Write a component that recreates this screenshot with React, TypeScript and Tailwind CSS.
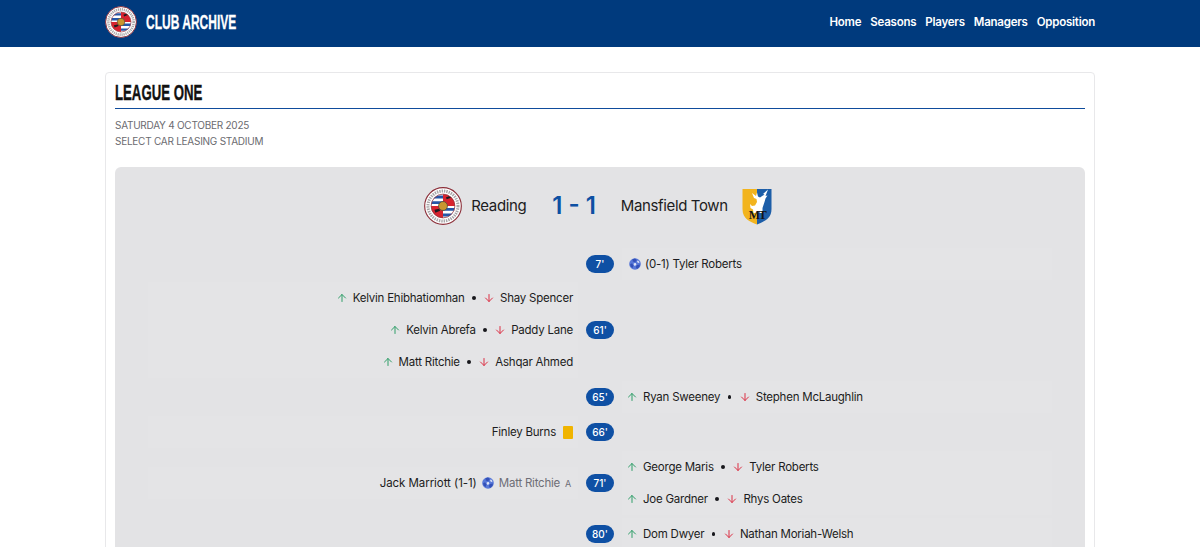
import { ArrowDown, ArrowUp } from 'lucide-react';

const ReadingCrest = ({ className, id }: { className: string; id: string }) => (
  <svg viewBox="0 0 40 40" className={className}>
    <defs>
      <clipPath id={id}>
        <circle cx="20" cy="20" r="12.500" />
      </clipPath>
    </defs>
    <circle cx="20" cy="20" r="19.300" fill="#fff" stroke="#8c2f39" strokeWidth="1.200" />
    <circle cx="20" cy="20" r="15.800" fill="none" stroke="#a8a6a8" strokeWidth="3.200" strokeDasharray="1.500 1" />
    <g clipPath={`url(#${id})`}>
      <rect x="7" y="7" width="26" height="26" fill="#fff" />
      <path d="M7 9h13v3H7zM7 15h13v3H7zM20 22h13v3H20zM20 28h13v3H20z" fill="#2657a8" />
      <path d="M20 7h13v13H20zM7 20h13v13H7z" fill="#d8232e" />
      <path d="M23 11l5-2 1 2-5 2zM11 24l5-1 1 2-5 2z" fill="#1d1d22" />
    </g>
    <circle cx="20" cy="20" r="12.500" fill="none" stroke="#8c2f39" strokeWidth="0.800" />
    <circle cx="20" cy="20" r="4.700" fill="#c9962f" stroke="#4d4a3a" strokeWidth="0.800" />
  </svg>
);

const MansfieldCrest = ({ className }: { className: string }) => (
  <svg viewBox="0 0 30 37" className={className}>
    <path d="M0.500 1H15V36.500C8 33.500 0.500 31 0.500 21z" fill="#f2b41e" />
    <path d="M15 1H29.500V21C29.500 31 22 33.500 15 36.500z" fill="#1d5ea8" />
    <path d="M26 1.500L21 6l1.500.5L18 9.500l-2-1-1-4-1 3.500-4-3 2 5 2.500 1 .5 3-2 3.500-3 .5-2-2 .5 4 2.500 1.500.5 3.500h9v-5l2-6 1-3.500 2-3-2 .5z" fill="#fff" />
    <text x="15" y="31" textAnchor="middle" fontFamily="'Liberation Serif', serif" fontWeight="700" fontSize="12" letterSpacing="-1.500" fill="#141414">MT</text>
  </svg>
);

const Ball = ({ className }: { className: string }) => (
  <svg viewBox="0 0 12 12" className={className}>
    <circle cx="6" cy="6" r="5.800" fill="#5878d8" />
    <path d="M3.500 1.200L6 .6 7.800 2 6.200 4.300 3.800 3.500zM1 6.500l2-1.200 1.500 2.200L3.600 10 1.800 8.800zM8 7l3-.5-.6 2.600-2.400 2L6.800 9z" fill="#3350b8" />
    <path d="M8.800 2.300l1.800 1.900-1 .9-1.600-1.100zM4.800 5.300l2-.3.600 1.700-1.500 1.200-1.200-1z" fill="#dfe5f7" />
  </svg>
);

const Name = ({ children, className = '' }: { children: React.ReactNode; className?: string }) => (
  <span className={`pt-[2px] ${className}`}>{children}</span>
);

const Sub = ({ on, off }: { on: string; off: string }) => (
  <span className="flex items-center">
    <ArrowUp className="w-3 h-3 text-[#2f9e68] mr-[5px]" strokeWidth={2} />
    <Name>{on}</Name>
    <span className="w-[3.5px] h-[3.5px] rounded-full bg-[#17171c] mx-[7.5px]" />
    <ArrowDown className="w-3 h-3 text-[#dc3045] mr-[5px]" strokeWidth={2} />
    <Name>{off}</Name>
  </span>
);

const Line = ({ children }: { children: React.ReactNode }) => (
  <div className="h-8 flex items-center">{children}</div>
);

interface EventRowProps {
  minute: string;
  left?: React.ReactNode;
  right?: React.ReactNode;
}

const EventRow = ({ minute, left, right }: EventRowProps) => (
  <div className="grid grid-cols-[1fr_44px_1fr] items-center">
    <div className={`flex flex-col items-end pr-[5px] ml-[15px] ${left ? 'bg-[#e4e4e6]' : ''}`}>{left}</div>
    <div className="flex justify-center">
      <span className="w-7 h-[18px] rounded-full bg-[#0f50a4] text-white text-[10px] font-medium tracking-normal flex items-center justify-center">
        {minute}
      </span>
    </div>
    <div className={`flex flex-col items-start pl-1 mr-[15px] ${right ? 'bg-[#e4e4e6]' : ''}`}>{right}</div>
  </div>
);

const navLinks = ['Home', 'Seasons', 'Players', 'Managers', 'Opposition'];

export default function App() {
  return (
    <div className="h-screen overflow-hidden bg-white font-['Inter',sans-serif] text-[#1c1c21]">
      <header className="h-[47px] bg-[#003a7d]">
        <div className="w-[990px] mx-auto h-[44px] flex items-center justify-between">
          <div className="flex items-center gap-[9px]">
            <ReadingCrest id="crest-nav" className="w-8 h-8" />
            <span className="inline-block origin-left scale-x-[0.6] font-['Liberation_Sans',sans-serif] font-bold text-white text-[20px] [-webkit-text-stroke:0.3px_currentColor]">
              CLUB ARCHIVE
            </span>
          </div>
          <nav className="flex gap-[9px] pt-[2px] text-white text-[11.5px] font-semibold tracking-[-0.02em]">
            {navLinks.map((link) => (
              <a key={link}>{link}</a>
            ))}
          </nav>
        </div>
      </header>

      <main className="w-[990px] mx-auto mt-[25px] border border-[#e8e8ea] rounded p-[9px] pt-[5px]">
        <h1 className="font-['Liberation_Sans',sans-serif] font-bold text-[22px] leading-[30px] text-[#111] border-b border-[#0f4c9c]">
          <span className="inline-block origin-left scale-x-[0.6] [-webkit-text-stroke:0.4px_currentColor]">LEAGUE ONE</span>
        </h1>
        <div className="mt-2 text-[10px] tracking-[-0.025em] leading-4 text-[#6b6b70]">
          <p>SATURDAY 4 OCTOBER 2025</p>
          <p>SELECT CAR LEASING STADIUM</p>
        </div>

        <section className="mt-[18px] bg-[#e3e3e5] rounded-md pb-6">
          <div className="h-[78px] pr-1 flex items-center justify-center">
            <ReadingCrest id="crest-home" className="w-[38px] h-[38px] mr-[9px]" />
            <span className="text-[15px] tracking-[-0.025em]">Reading</span>
            <span className="ml-[26px] mr-[25px] text-[24px] font-semibold text-[#0d50a3]">1 - 1</span>
            <span className="text-[15px] tracking-[-0.025em]">Mansfield Town</span>
            <MansfieldCrest className="w-[30px] h-[37px] ml-[14px]" />
          </div>

          <div className="mx-[18px] mt-[3px] flex flex-col gap-[3px] text-[11.5px] tracking-[-0.02em]">
            <div className="-mb-px">
              <EventRow
                minute="7'"
                right={
                  <Line>
                    <Ball className="w-3 h-3 ml-[3px] mr-[4px]" />
                    <Name>(0-1) Tyler Roberts</Name>
                  </Line>
                }
              />
            </div>
            <EventRow
              minute="61'"
              left={
                <>
                  <Line><Sub on="Kelvin Ehibhatiomhan" off="Shay Spencer" /></Line>
                  <Line><Sub on="Kelvin Abrefa" off="Paddy Lane" /></Line>
                  <Line><Sub on="Matt Ritchie" off="Ashqar Ahmed" /></Line>
                </>
              }
            />
            <EventRow minute="65'" right={<Line><Sub on="Ryan Sweeney" off="Stephen McLaughlin" /></Line>} />
            <EventRow
              minute="66'"
              left={
                <Line>
                  <Name>Finley Burns</Name>
                  <span className="w-[10px] h-[13px] rounded-[1px] bg-[#f0b400] ml-[7px]" />
                </Line>
              }
            />
            <EventRow
              minute="71'"
              left={
                <Line>
                  <Name className="tracking-[-0.005em]">Jack Marriott (1-1)</Name>
                  <Ball className="w-3 h-3 mx-[5px]" />
                  <Name className="text-[#6e6e76]">Matt Ritchie</Name>
                  <Name className="text-[#6e6e76] text-[9px] ml-[5px] mr-[2px]">A</Name>
                </Line>
              }
              right={
                <>
                  <Line><Sub on="George Maris" off="Tyler Roberts" /></Line>
                  <Line><Sub on="Joe Gardner" off="Rhys Oates" /></Line>
                </>
              }
            />
            <EventRow minute="80'" right={<Line><Sub on="Dom Dwyer" off="Nathan Moriah-Welsh" /></Line>} />
          </div>
        </section>
      </main>
    </div>
  );
}
